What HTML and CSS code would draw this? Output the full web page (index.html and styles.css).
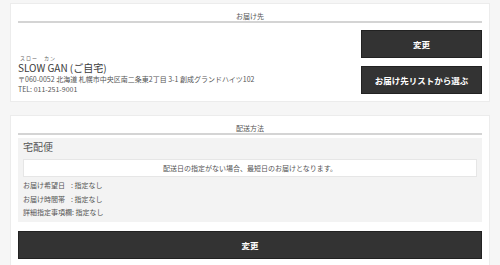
FILE: index.html
```html
<!DOCTYPE html>
<html>
<head>
    <title>お届け先</title>
    <meta name="viewport" content="width=device-width, initial-scale=1">
    <link rel="stylesheet" href="styles.css">
</head>
<body>
    <div class="page">
        <div class="card">
            <h2 class="card-title">お届け先</h2>
            <div class="address-row">
                <div class="address">
                    <div class="kana">スロー　カン</div>
                    <div class="name">SLOW GAN (ご自宅)</div>
                    <div class="line">〒060-0052 北海道 札幌市中央区南二条東2丁目 3-1 創成グランドハイツ102</div>
                    <div class="line">TEL: 011-251-9001</div>
                </div>
                <div class="buttons">
                    <button class="btn">変更</button>
                    <button class="btn">お届け先リストから選ぶ</button>
                </div>
            </div>
        </div>

        <div class="card">
            <h2 class="card-title">配送方法</h2>
            <div class="delivery">
                <h3>宅配便</h3>
                <div class="notice">配送日の指定がない場合、最短日のお届けとなります。</div>
                <div class="info-row"><span class="label">お届け希望日</span><span>: 指定なし</span></div>
                <div class="info-row"><span class="label">お届け時間帯</span><span>: 指定なし</span></div>
                <div class="info-row"><span class="label">詳細指定事項欄</span><span>: 指定なし</span></div>
            </div>
            <button class="btn btn-wide">変更</button>
        </div>
    </div>
</body>
</html>
```

FILE: styles.css
```css
body {
    margin: 0;
    background-color: #f6f6f6;
    font-family: "Noto Sans CJK JP", "Noto Sans", sans-serif;
    color: #444;
}

.page {
    padding: 3px 10px;
}

.card {
    background-color: #fff;
    border: 1px solid #ececec;
    padding: 0 7px 7px;
    margin-bottom: 13px;
}

.card-title {
    margin: 0;
    padding-top: 7px;
    height: 10px;
    font-size: 7px;
    line-height: 10px;
    font-weight: normal;
    text-align: center;
    color: #555;
    border-bottom: 2px solid #d4d4d4;
}

.address-row {
    display: flex;
    justify-content: space-between;
    align-items: flex-end;
    padding-top: 7px;
}

.kana {
    font-size: 5px;
    line-height: 9px;
    letter-spacing: 1px;
    padding-left: 2px;
    color: #666;
}

.name {
    font-size: 10px;
    line-height: 12px;
    color: #3a3a3a;
}

.line {
    font-size: 7px;
    line-height: 10px;
    color: #555;
}

.buttons {
    display: flex;
    flex-direction: column;
    gap: 8px;
    width: 121px;
}

.btn {
    height: 28px;
    background-color: #333;
    color: #fff;
    border: 1px solid #222;
    font-family: inherit;
    font-size: 8.5px;
    font-weight: bold;
    cursor: pointer;
}

.btn-wide {
    width: 100%;
}

.delivery {
    background-color: #f3f3f3;
    margin: 3px 0 8px;
    padding: 1px 5px 2.5px;
}

.delivery h3 {
    margin: 0;
    font-size: 10px;
    line-height: 16px;
    font-weight: normal;
    color: #555;
}

.notice {
    background-color: #fff;
    border: 1px solid #e6e6e6;
    margin: 4px 0 2px;
    height: 16px;
    line-height: 16px;
    font-size: 7px;
    text-align: center;
    color: #555;
}

.info-row {
    display: flex;
    font-size: 7px;
    line-height: 13.5px;
    color: #555;
}

.info-row .label {
    min-width: 48px;
}
```
